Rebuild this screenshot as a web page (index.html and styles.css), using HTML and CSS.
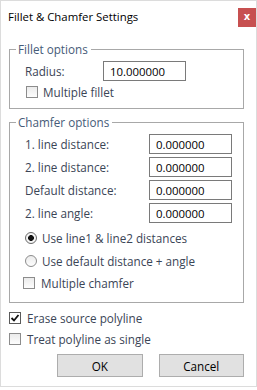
FILE: index.html
```html
<!DOCTYPE html>
<html>
<head>
<meta charset="utf-8">
<link rel="stylesheet" href="styles.css">
</head>
<body>
<div class="dialog">
  <div class="titlebar">
    <span class="title">Fillet &amp; Chamfer Settings</span>
    <span class="close">x</span>
  </div>
  <div class="content">
    <fieldset class="group fillet">
      <legend>Fillet options</legend>
      <div class="field radius">
        <label class="lbl lbl-radius">Radius:</label>
        <input class="num" type="text" value="10.000000">
      </div>
      <label class="check check-fillet"><input type="checkbox"><span>Multiple fillet</span></label>
    </fieldset>
    <fieldset class="group chamfer">
      <legend>Chamfer options</legend>
      <div class="field first">
        <label class="lbl lbl-wide">1. line distance:</label>
        <input class="num" type="text" value="0.000000">
      </div>
      <div class="field">
        <label class="lbl lbl-wide">2. line distance:</label>
        <input class="num" type="text" value="0.000000">
      </div>
      <div class="field">
        <label class="lbl lbl-wide">Default distance:</label>
        <input class="num" type="text" value="0.000000">
      </div>
      <div class="field">
        <label class="lbl lbl-wide">2. line angle:</label>
        <input class="num" type="text" value="0.000000">
      </div>
      <label class="check radio-row"><input type="radio" name="mode" checked><span>Use line1 &amp; line2 distances</span></label>
      <label class="check radio-row"><input type="radio" name="mode"><span>Use default distance + angle</span></label>
      <label class="check check-chamfer"><input type="checkbox"><span>Multiple chamfer</span></label>
    </fieldset>
    <label class="check outer first-outer"><input type="checkbox" checked><span>Erase source polyline</span></label>
    <label class="check outer"><input type="checkbox"><span>Treat polyline as single</span></label>
    <div class="buttons">
      <button class="btn">OK</button>
      <button class="btn">Cancel</button>
    </div>
  </div>
</div>
</body>
</html>
```

FILE: styles.css
```css
* { box-sizing: border-box; }
html, body { margin: 0; padding: 0; background: #fff; }
body {
  font-family: "Open Sans", "Noto Sans", sans-serif;
  font-size: 11.7px;
  color: #000;
}
.dialog {
  width: 257px;
  height: 387px;
  border: 1px solid #dcdcdc;
  background: #fff;
}
.titlebar {
  height: 30px;
  display: flex;
  align-items: flex-start;
  justify-content: space-between;
}
.title {
  font-size: 11.4px;
  margin: 8px 0 0 7px;
  line-height: 16px;
  color: #000;
}
.close {
  width: 18px;
  height: 19px;
  margin-top: 7px;
  background: #c75050;
  color: #fff;
  font-weight: bold;
  font-size: 10px;
  line-height: 17px;
  text-align: center;
  font-family: "DejaVu Sans", sans-serif;
}
.content {
  padding: 0 12px 0 8px;
}
.group {
  margin: 0;
  padding: 0;
  border: 1px solid #a8a8a8;
  min-width: 0;
}
.group legend {
  padding: 0 3px 0 2px;
  margin-left: 6px;
  line-height: 15px;
  color: #465b78;
  font-size: 11.7px;
}
.fillet { margin-top: 11px; padding-bottom: 9px; }
.chamfer { margin-top: 6px; padding-bottom: 8px; }
.field {
  display: flex;
  align-items: center;
  height: 20px;
  margin-top: 3px;
  padding-left: 15px;
}
.radius { margin-top: 4px; }
.field.first { margin-top: 4px; }
.lbl {
  color: #3b4556;
}
.lbl-radius { width: 78px; }
.lbl-wide { width: 124px; }
.num {
  width: 83px;
  height: 20px;
  border: 1px solid #7a7a7a;
  font: inherit;
  font-size: 11.4px;
  color: #000;
  padding: 0 0 0 6px;
  margin: 0;
  outline: none;
  background: #fff;
}
.check {
  display: flex;
  align-items: center;
  color: #3b4556;
}
.check input {
  -webkit-appearance: none;
  appearance: none;
  margin: 0;
  width: 12px;
  height: 12px;
  border: 1px solid #8c8c8c;
  background: linear-gradient(#ebebeb, #fdfdfd);
  flex: none;
}
.check input[type="checkbox"]:checked {
  border-color: #5a5a5a;
  background: #fff url("data:image/svg+xml;utf8,<svg xmlns='http://www.w3.org/2000/svg' width='10' height='10' viewBox='0 0 10 10'><path d='M1.5 5 L4 7.5 L8.5 2' fill='none' stroke='%23111' stroke-width='1.8'/></svg>") center/10px 10px no-repeat;
}
.check input[type="radio"] {
  border-radius: 50%;
  width: 12px;
  height: 12px;
}
.check input[type="radio"]:checked {
  background: radial-gradient(circle, #111 0 2.6px, #f4f4f4 3.2px);
  border-color: #6a6a6a;
}
.check-fillet {
  height: 14px;
  margin-top: 4px;
  padding-left: 16px;
}
.check-fillet span { margin-left: 5px; }
.radio-row {
  height: 23px;
  padding-left: 15px;
}
.radio-row:first-of-type { margin-top: 3px; }
.radio-row span { margin-left: 5px; }
.check-chamfer {
  height: 22px;
  padding-left: 13px;
}
.check-chamfer span { margin-left: 6px; }
.outer {
  height: 21px;
  padding-left: 0;
}
.outer span { margin-left: 6px; }
.first-outer { margin-top: 4px; }
.buttons {
  display: flex;
  gap: 16px;
  margin-top: 5px;
  padding-left: 48px;
}
.btn {
  width: 86px;
  height: 23px;
  margin: 0;
  padding: 0;
  border: 1px solid #adadad;
  background: #e1e1e1;
  font: inherit;
  font-size: 11.7px;
  color: #000;
}
```
